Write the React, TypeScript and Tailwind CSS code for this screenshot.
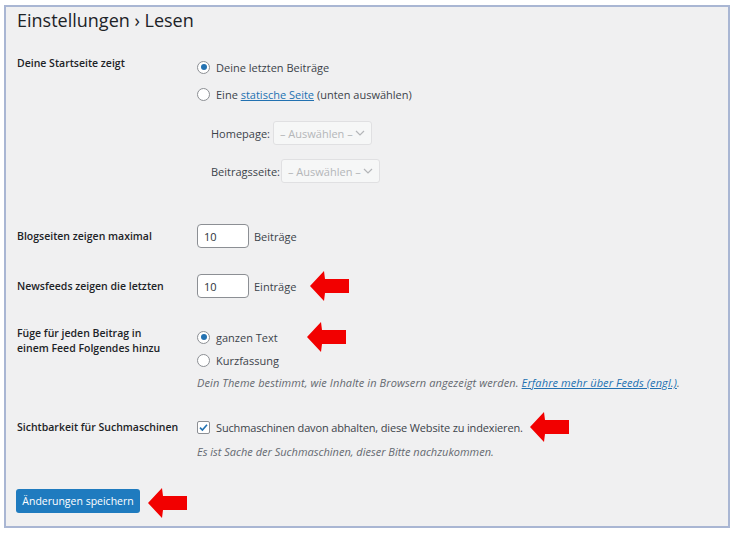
import { ReactNode } from "react"

function Arrow({ className = "" }: { className?: string }) {
  return (
    <svg width="39" height="30" viewBox="0 0 39 30" className={className}>
      <polygon points="0,15 14,0 15,8 39,8 39,22 15,22 14,30" fill="#f20000" />
    </svg>
  )
}

function Radio({ checked }: { checked?: boolean }) {
  return (
    <span className="flex h-[13px] w-[13px] shrink-0 items-center justify-center rounded-full border border-[#8c8f94] bg-white">
      {checked && <span className="h-[6px] w-[6px] rounded-full bg-[#2271b1]" />}
    </span>
  )
}

function Checkbox() {
  return (
    <span className="flex h-[13px] w-[13px] shrink-0 items-center justify-center rounded-[2px] border border-[#8c8f94] bg-white">
      <svg width="11" height="11" viewBox="0 0 11 11">
        <path d="M2 5.6 L4.4 8 L9 2.8" fill="none" stroke="#2271b1" strokeWidth="1.6" />
      </svg>
    </span>
  )
}

function DisabledSelect() {
  return (
    <div className="flex h-[24px] w-[99px] items-center justify-between rounded-[3px] border border-[#e0e0e2] bg-[#f6f7f7] pl-[6px] pr-[6px] text-[#b4b6b9]">
      <span>– Auswählen –</span>
      <svg width="10" height="6" viewBox="0 0 10 6">
        <path d="M1 1 L5 5 L9 1" fill="none" stroke="#b4b6b9" strokeWidth="1.2" />
      </svg>
    </div>
  )
}

function NumberInput() {
  return (
    <div className="flex h-[24px] w-[52px] items-center rounded-[4px] border border-[#8c8f94] bg-white pl-[6px] text-[#2c3338]">
      10
    </div>
  )
}

const labelCls = "w-[180px] shrink-0 text-[10.5px] font-semibold text-[#1d2327]"

function Row({ label, children, className = "" }: { label: ReactNode, children: ReactNode, className?: string }) {
  return (
    <div className={`flex ${className}`}>
      <div className={labelCls}>{label}</div>
      <div className="flex flex-col">{children}</div>
    </div>
  )
}

export default function App() {
  return (
    <div className="h-[535px] w-[734px] bg-white pl-[4px] pt-[5px] font-['Open_Sans',sans-serif] text-[11px] leading-[15px] text-[#3c434a]">
      <div className="h-[523px] w-[726px] border-2 border-[#a9b6d3] bg-[#f0f0f1] pl-[11px]">
        <h1 className="h-[26px] text-[18px] leading-[26px] text-[#1d2327]">Einstellungen › Lesen</h1>

        <Row label="Deine Startseite zeigt" className="mt-[23px]">
          <div className="pt-[1px]">
            <div className="flex h-[20px] items-center gap-[6px]">
              <Radio checked />
              <span>Deine letzten Beiträge</span>
            </div>
            <div className="mt-[7px] flex h-[20px] items-center gap-[6px]">
              <Radio />
              <span>
                Eine <a className="text-[#2271b1] underline">statische Seite</a> (unten auswählen)
              </span>
            </div>
            <div className="ml-[14px] mt-[17px] flex items-center gap-[3px]">
              <span>Homepage:</span>
              <DisabledSelect />
            </div>
            <div className="ml-[14px] mt-[14px] flex items-center gap-[1px]">
              <span>Beitragsseite:</span>
              <DisabledSelect />
            </div>
          </div>
        </Row>

        <div className="mt-[41px] flex items-center">
          <div className={labelCls}>Blogseiten zeigen maximal</div>
          <NumberInput />
          <span className="ml-[5px]">Beiträge</span>
        </div>

        <div className="mt-[23px] flex items-center">
          <div className={labelCls}>Newsfeeds zeigen die letzten</div>
          <NumberInput />
          <span className="ml-[5px]">Einträge</span>
          <Arrow className="ml-[14px]" />
        </div>

        <Row
          label={<>Füge für jeden Beitrag in<br />einem Feed Folgendes hinzu</>}
          className="mt-[25px]"
        >
          <div className="pt-[1px]">
            <div className="flex h-[20px] items-center gap-[6px]">
              <Radio checked />
              <span>ganzen Text</span>
              <Arrow className="ml-[23px]" />
            </div>
            <div className="mt-[3px] flex h-[20px] items-center gap-[6px]">
              <Radio />
              <span>Kurzfassung</span>
            </div>
            <p className="mt-[5px] italic tracking-[0.1px] text-[#646970]">
              Dein Theme bestimmt, wie Inhalte in Browsern angezeigt werden.{" "}
              <a className="text-[#2271b1] underline">Erfahre mehr über Feeds (engl.)</a>.
            </p>
          </div>
        </Row>

        <div className="mt-[27px] flex">
          <div className={`${labelCls} pt-[3px]`}>Sichtbarkeit für Suchmaschinen</div>
          <div className="flex flex-col">
            <div className="flex h-[20px] items-center gap-[6px]">
              <Checkbox />
              <span className="tracking-[-0.15px]">Suchmaschinen davon abhalten, diese Website zu indexieren.</span>
              <Arrow className="ml-[1px]" />
            </div>
            <p className="mt-[7px] italic text-[#646970]">Es ist Sache der Suchmaschinen, dieser Bitte nachzukommen.</p>
          </div>
        </div>

        <div className="mt-[25px] flex items-center">
          <button className="-ml-px h-[24px] w-[124px] rounded-[3px] bg-[#1f7bbf] text-[10.5px] text-white">Änderungen speichern</button>
          <Arrow className="ml-[8px] mt-[4px]" />
        </div>
      </div>
    </div>
  )
}
